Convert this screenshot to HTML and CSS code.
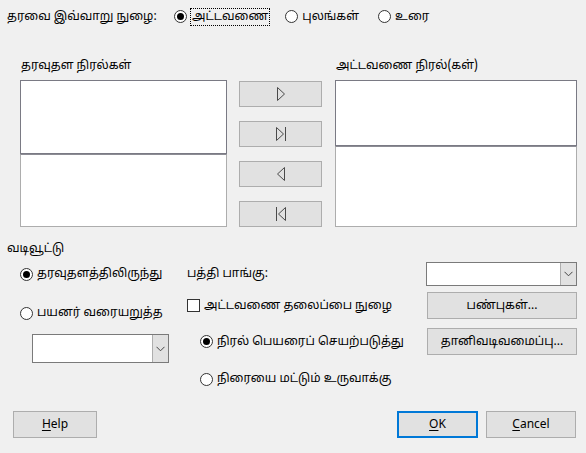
FILE: index.html
```html
<!DOCTYPE html>
<html lang="ta">
<head>
<meta charset="utf-8">
<link rel="stylesheet" href="styles.css">
</head>
<body>
<div class="dialog">
  <div class="top-row">
    <span class="top-label">தரவை இவ்வாறு நுழை:</span>
    <label class="opt opt-first">
      <svg class="radio" width="13" height="13" viewBox="0 0 13 13"><circle cx="6.5" cy="6.5" r="6" fill="#fff" stroke="#333"/><circle cx="6.5" cy="6.5" r="3.5" fill="#000"/></svg>
      <span class="focus">அட்டவணை</span>
    </label>
    <label class="opt opt-second">
      <svg class="radio" width="13" height="13" viewBox="0 0 13 13"><circle cx="6.5" cy="6.5" r="6" fill="#fff" stroke="#333"/></svg>
      <span>புலங்கள்</span>
    </label>
    <label class="opt opt-third">
      <svg class="radio" width="13" height="13" viewBox="0 0 13 13"><circle cx="6.5" cy="6.5" r="6" fill="#fff" stroke="#333"/></svg>
      <span>உரை</span>
    </label>
  </div>

  <div class="columns">
    <div class="col col-left">
      <div class="col-title">தரவுதள நிரல்கள்</div>
      <div class="list">
        <div class="list-top list-top-left"></div>
        <div class="list-bottom"></div>
      </div>
    </div>
    <div class="col col-mid">
      <button class="btn arrow-btn"><svg width="12" height="16" viewBox="0 0 12 16"><polygon points="2.5,1.5 9.5,8 2.5,14.5" fill="none" stroke="#4a4a4a"/></svg></button>
      <button class="btn arrow-btn"><svg width="12" height="16" viewBox="0 0 12 16"><polygon points="1.5,1.5 8.5,8 1.5,14.5" fill="none" stroke="#4a4a4a"/><line x1="10.5" y1="1" x2="10.5" y2="15" stroke="#4a4a4a"/></svg></button>
      <button class="btn arrow-btn"><svg width="12" height="16" viewBox="0 0 12 16"><polygon points="9.5,1.5 2.5,8 9.5,14.5" fill="none" stroke="#4a4a4a"/></svg></button>
      <button class="btn arrow-btn"><svg width="12" height="16" viewBox="0 0 12 16"><line x1="1.5" y1="1" x2="1.5" y2="15" stroke="#4a4a4a"/><polygon points="10.5,1.5 3.5,8 10.5,14.5" fill="none" stroke="#4a4a4a"/></svg></button>
    </div>
    <div class="col col-right">
      <div class="col-title">அட்டவணை நிரல்(கள்)</div>
      <div class="list">
        <div class="list-top list-top-right"></div>
        <div class="list-bottom"></div>
      </div>
    </div>
  </div>

  <div class="section-title">வடிவூட்டு</div>

  <div class="format">
    <div class="format-left">
      <label class="opt row-opt">
        <svg class="radio" width="13" height="13" viewBox="0 0 13 13"><circle cx="6.5" cy="6.5" r="6" fill="#fff" stroke="#333"/><circle cx="6.5" cy="6.5" r="3.5" fill="#000"/></svg>
        <span>தரவுதளத்திலிருந்து</span>
      </label>
      <label class="opt row-opt row-opt-2">
        <svg class="radio" width="13" height="13" viewBox="0 0 13 13"><circle cx="6.5" cy="6.5" r="6" fill="#fff" stroke="#333"/></svg>
        <span>பயனர் வரையறுத்த</span>
      </label>
      <div class="combo combo-left">
        <div class="combo-field"></div>
        <div class="combo-btn"><svg width="9" height="6" viewBox="0 0 9 6"><polyline points="0.5,0.8 4.5,4.8 8.5,0.8" fill="none" stroke="#444"/></svg></div>
      </div>
    </div>
    <div class="format-right">
      <div class="fr-row fr-row-1">
        <span>பத்தி பாங்கு:</span>
        <div class="combo combo-right">
          <div class="combo-field"></div>
          <div class="combo-btn"><svg width="9" height="6" viewBox="0 0 9 6"><polyline points="0.5,0.8 4.5,4.8 8.5,0.8" fill="none" stroke="#444"/></svg></div>
        </div>
      </div>
      <div class="fr-row fr-row-2">
        <label class="opt">
          <span class="checkbox"></span>
          <span>அட்டவணை தலைப்பை நுழை</span>
        </label>
        <button class="btn side-btn">பண்புகள்...</button>
      </div>
      <div class="fr-row fr-row-3">
        <label class="opt indent">
          <svg class="radio" width="13" height="13" viewBox="0 0 13 13"><circle cx="6.5" cy="6.5" r="6" fill="#fff" stroke="#333"/><circle cx="6.5" cy="6.5" r="3.5" fill="#000"/></svg>
          <span>நிரல் பெயரைப் செயற்படுத்து</span>
        </label>
        <button class="btn side-btn">தானிவடிவமைப்பு...</button>
      </div>
      <div class="fr-row fr-row-4">
        <label class="opt indent">
          <svg class="radio" width="13" height="13" viewBox="0 0 13 13"><circle cx="6.5" cy="6.5" r="6" fill="#fff" stroke="#333"/></svg>
          <span>நிரையை மட்டும் உருவாக்கு</span>
        </label>
      </div>
    </div>
  </div>

  <div class="footer">
    <button class="btn foot-btn help-btn"><u>H</u>elp</button>
    <div class="foot-right">
      <button class="btn foot-btn ok-btn"><u>O</u>K</button>
      <button class="btn foot-btn cancel-btn"><u>C</u>ancel</button>
    </div>
  </div>
</div>
</body>
</html>
```

FILE: styles.css
```css
* { box-sizing: border-box; }
html, body {
  margin: 0;
  padding: 0;
  background: #f0f0f0;
}
body {
  width: 586px;
  height: 453px;
  overflow: hidden;
  font-family: "Segoe UI", "Noto Sans Tamil", "Lohit Tamil", "Noto Sans", "DejaVu Sans", sans-serif;
  font-size: 12px;
  color: #000;
}
.dialog {
  width: 586px;
  height: 453px;
  display: flex;
  flex-direction: column;
}
.opt {
  display: flex;
  align-items: center;
  gap: 4px;
  white-space: nowrap;
}
.radio { flex: none; display: block; }
.top-row {
  display: flex;
  align-items: center;
  height: 17px;
  margin-top: 8px;
  padding-left: 7px;
}
.top-label { width: 167px; }
.focus {
  outline: 1px dotted #000;
  padding: 0 1px;
  line-height: 16px;
}
.opt-second { margin-left: 16px; }
.opt-third { margin-left: 19px; }
.columns {
  display: flex;
  margin-top: 34px;
  padding-left: 20px;
}
.col-title {
  height: 21px;
  line-height: 14px;
  padding-left: 1px;
}
.col-left { width: 207px; }
.col-right { width: 242px; margin-left: 13px; }
.col-mid {
  width: 83px;
  margin-left: 12px;
  padding-top: 22px;
  display: flex;
  flex-direction: column;
  gap: 14px;
}
.list {
  display: flex;
  flex-direction: column;
  height: 147px;
}
.list-top {
  background: #fff;
  border: 1px solid #7a7a84;
}
.list-top-left { height: 74px; }
.list-top-right { height: 66px; }
.list-bottom {
  flex: 1;
  background: #fff;
  border: 1px solid #adadad;
  border-top-color: #8c8c94;
}
.btn {
  font: inherit;
  color: #000;
  background: #e1e1e1;
  border: 1px solid #adadad;
  padding: 0;
  margin: 0;
  display: flex;
  align-items: center;
  justify-content: center;
}
.arrow-btn { height: 26px; width: 83px; }
.arrow-btn svg { display: block; }
.section-title {
  margin-top: 14px;
  padding-left: 7px;
  height: 16px;
  line-height: 16px;
}
.format {
  display: flex;
  margin-top: 7px;
}
.format-left {
  width: 187px;
  padding-left: 20px;
  display: flex;
  flex-direction: column;
}
.row-opt { height: 20px; }
.row-opt-2 { margin-top: 19px; }
.combo {
  display: flex;
  background: #fff;
  border: 1px solid #7a7a7a;
}
.combo-field { flex: 1; }
.combo-btn {
  width: 16px;
  background: #e1e1e1;
  border-left: 1px solid #adadad;
  display: flex;
  align-items: center;
  justify-content: center;
}
.combo-left {
  width: 137px;
  height: 29px;
  margin-left: 12px;
  margin-top: 11px;
}
.format-right {
  flex: 1;
  display: flex;
  flex-direction: column;
}
.fr-row {
  display: flex;
  align-items: center;
  justify-content: space-between;
  padding-right: 9px;
}
.fr-row-1 { height: 24px; margin-top: -2px; }
.fr-row-2 { height: 27px; margin-top: 6px; }
.fr-row-3 { height: 27px; margin-top: 9px; }
.fr-row-4 { height: 20px; margin-top: 14px; }
.combo-right { width: 151px; height: 24px; }
.checkbox {
  width: 13px;
  height: 13px;
  background: #fff;
  border: 1px solid #333;
  flex: none;
}
.indent { padding-left: 13px; }
.side-btn { width: 150px; height: 27px; }
.footer {
  display: flex;
  justify-content: space-between;
  margin-top: auto;
  margin-bottom: 15px;
  padding: 0 10px 0 13px;
}
.foot-right { display: flex; gap: 8px; }
.foot-btn { height: 27px; }
.help-btn { width: 84px; }
.ok-btn { width: 81px; border: 2px solid #0078d7; }
.cancel-btn { width: 90px; }
u { text-decoration-thickness: 1px; text-underline-offset: 2px; }
```
